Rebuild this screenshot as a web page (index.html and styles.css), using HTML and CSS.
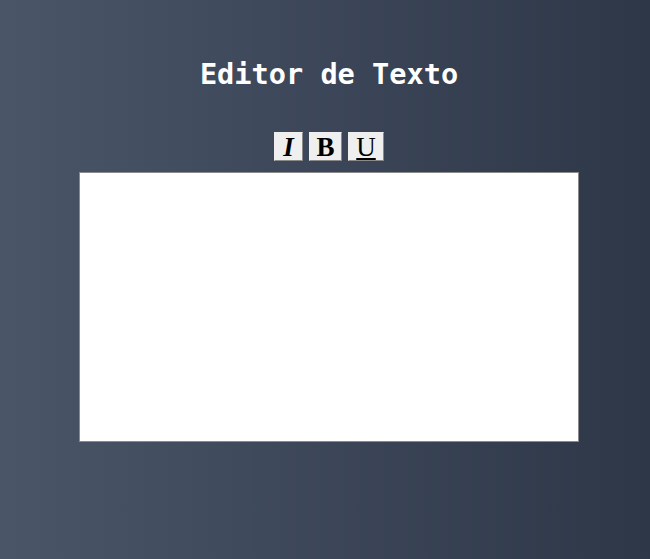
FILE: index.html
```html
<!DOCTYPE html>
<html lang="pt">
<head>
<meta charset="utf-8">
<title>Editor de Texto</title>
<link rel="stylesheet" href="styles.css">
</head>
<body>
<main class="app">
  <h1 class="title">Editor de Texto</h1>
  <div class="toolbar">
    <button class="tool tool-italic" type="button"><i>I</i></button>
    <button class="tool tool-bold" type="button"><b>B</b></button>
    <button class="tool tool-underline" type="button"><u>U</u></button>
  </div>
  <textarea class="editor"></textarea>
</main>
</body>
</html>
```
FILE: styles.css
```css
html, body {
  margin: 0;
  height: 100%;
}
body {
  background: linear-gradient(to right, #4a5568, #2d3748);
}
.app {
  display: flex;
  flex-direction: column;
  align-items: center;
  padding-left: 8px;
}
.title {
  font-family: "DejaVu Sans Mono", monospace;
  font-weight: bold;
  font-size: 28.6px;
  color: #ffffff;
  margin: 56px 0 0 0;
  line-height: 36px;
}
.toolbar {
  display: flex;
  gap: 6px;
  margin-top: 40px;
}
.tool {
  font-family: "Liberation Serif", serif;
  font-size: 27px;
  line-height: 26px;
  height: 29px;
  padding: 0 4px;
  background: #efefef;
  border: 1px solid #efefef;
  border-right-color: #8a8a8a;
  border-bottom-color: #8a8a8a;
  color: #000;
  font-weight: bold;
}
.tool-italic { width: 29px; }
.tool-bold { width: 33px; }
.tool-underline { width: 36px; font-weight: normal; }
.editor {
  margin-top: 11px;
  width: 500px;
  height: 270px;
  box-sizing: border-box;
  border: 1px solid #8a8a8a;
  background: #fff;
  resize: none;
  padding: 2px;
}
```
